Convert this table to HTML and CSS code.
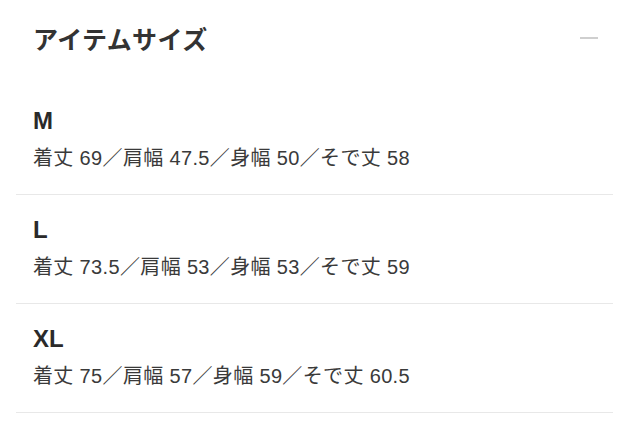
FILE: index.html
```html
<!DOCTYPE html>
<html lang="ja">
<head>
<meta charset="utf-8">
<link rel="stylesheet" href="styles.css">
</head>
<body>
<section class="panel">
  <div class="header">
    <h2 class="title">アイテムサイズ</h2>
    <span class="minus" aria-label="閉じる"></span>
  </div>
  <ul class="sizes">
    <li class="size first">
      <div class="label">M</div>
      <div class="spec">着丈 69／肩幅 47.5／身幅 50／そで丈 58</div>
    </li>
    <li class="size">
      <div class="label">L</div>
      <div class="spec">着丈 73.5／肩幅 53／身幅 53／そで丈 59</div>
    </li>
    <li class="size">
      <div class="label">XL</div>
      <div class="spec">着丈 75／肩幅 57／身幅 59／そで丈 60.5</div>
    </li>
  </ul>
</section>
</body>
</html>
```

FILE: styles.css
```css
html, body {
  margin: 0;
  padding: 0;
  background: #fff;
}
body {
  font-family: "Liberation Sans", "Noto Sans CJK JP", sans-serif;
  color: #333;
}
.panel {
  padding: 0 17px 0 16px;
}
.header {
  height: 76px;
  display: flex;
  align-items: center;
  justify-content: space-between;
  padding: 0 15px 0 17px;
}
.title {
  margin: 0;
  font-size: 25px;
  font-weight: bold;
  color: #333;
  font-family: "Noto Sans CJK JP", sans-serif;
  line-height: 30px;
  letter-spacing: 0.4px;
}
.minus {
  display: block;
  width: 18px;
  height: 2px;
  background: #cfcfcf;
}
.sizes {
  list-style: none;
  margin: 0;
  padding: 0;
}
.size {
  padding: 20px 18px 22px 17px;
  border-bottom: 1px solid #e8e8e8;
}
.size.first {
  padding-top: 30px;
}
.label {
  font-size: 24px;
  font-weight: bold;
  line-height: 30px;
  color: #2a2a2a;
}
.spec {
  margin-top: 8px;
  font-size: 20px;
  line-height: 28px;
  color: #3a3a3a;
  letter-spacing: 0.35px;
}
```
